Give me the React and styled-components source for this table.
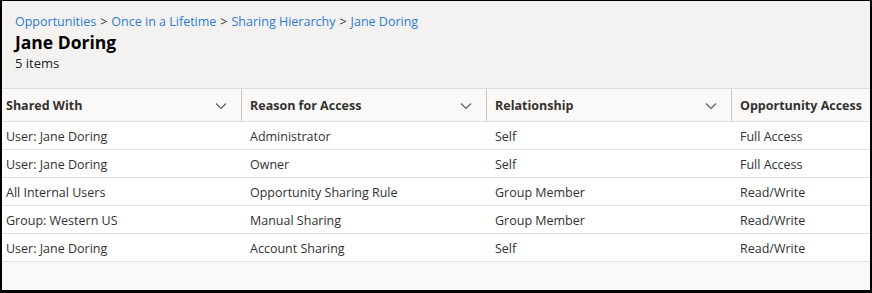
import React from 'react';
import styled, { createGlobalStyle } from 'styled-components';

const GlobalStyle = createGlobalStyle`
  html, body {
    margin: 0;
    padding: 0;
    background: #000;
  }
  * {
    box-sizing: border-box;
  }
`;

const columns = [
  { key: 'sharedWith', label: 'Shared With', width: 240, pad: 4, sortable: true },
  { key: 'reason', label: 'Reason for Access', width: 245, pad: 8, sortable: true },
  { key: 'relationship', label: 'Relationship', width: 245, pad: 8, sortable: true },
  { key: 'access', label: 'Opportunity Access', width: 245, pad: 8, sortable: false },
];

const rows = [
  { sharedWith: 'User: Jane Doring', reason: 'Administrator', relationship: 'Self', access: 'Full Access' },
  { sharedWith: 'User: Jane Doring', reason: 'Owner', relationship: 'Self', access: 'Full Access' },
  { sharedWith: 'All Internal Users', reason: 'Opportunity Sharing Rule', relationship: 'Group Member', access: 'Read/Write' },
  { sharedWith: 'Group: Western US', reason: 'Manual Sharing', relationship: 'Group Member', access: 'Read/Write' },
  { sharedWith: 'User: Jane Doring', reason: 'Account Sharing', relationship: 'Self', access: 'Read/Write' },
];

const crumbs = ['Opportunities', 'Once in a Lifetime', 'Sharing Hierarchy', 'Jane Doring'];

const Chevron = () => (
  <svg width="12" height="8" viewBox="0 0 12 8" fill="none">
    <path d="M1 1.5 L6 6.5 L11 1.5" stroke="#605e5c" strokeWidth="1.2" />
  </svg>
);

const App = function App() {
  const template = columns.map((c) => `${c.width}px`).join(' ');
  return (
    <>
      <GlobalStyle />
      <Frame>
        <PageHeader>
          <Breadcrumb>
            {crumbs.map((c, i) => (
              <React.Fragment key={c}>
                {i > 0 && <Sep>&gt;</Sep>}
                <Crumb href="#">{c}</Crumb>
              </React.Fragment>
            ))}
          </Breadcrumb>
          <Title>Jane Doring</Title>
          <Count>5 items</Count>
        </PageHeader>
        <Grid>
          <HeaderRow $template={template}>
            {columns.map((c, i) => (
              <HeaderCell key={c.key} $pad={c.pad} $last={i === columns.length - 1}>
                <span>{c.label}</span>
                {c.sortable && <Chevron />}
              </HeaderCell>
            ))}
          </HeaderRow>
          {rows.map((r, ri) => (
            <Row key={ri} $template={template}>
              {columns.map((c) => (
                <Cell key={c.key} $pad={c.pad}>{r[c.key]}</Cell>
              ))}
            </Row>
          ))}
        </Grid>
        <Filler />
      </Frame>
    </>
  );
};

const Frame = styled.div`
  width: 872px;
  height: 293px;
  border-style: solid;
  border-color: #000;
  border-width: 1px 2px 3px 2px;
  background: #faf9f8;
  display: flex;
  flex-direction: column;
  overflow: hidden;
  font-family: "Open Sans", "Noto Sans", sans-serif;
  color: #323130;
`;

const PageHeader = styled.div`
  background: #f3f2f1;
  padding: 11px 13px 0;
  height: 88px;
  flex-shrink: 0;
  border-bottom: 1px solid #e1dfdd;
`;

const Breadcrumb = styled.div`
  font-size: 12.5px;
  line-height: 19px;
  display: flex;
  align-items: center;
  white-space: nowrap;
`;

const Crumb = styled.a`
  color: #2b7cd3;
  text-decoration: none;
`;

const Sep = styled.span`
  color: #323130;
  margin: 0 4px;
`;

const Title = styled.div`
  font-size: 17.5px;
  font-weight: 700;
  line-height: 23px;
  color: #000;
`;

const Count = styled.div`
  font-size: 13px;
  line-height: 18px;
  color: #201f1e;
`;

const Grid = styled.div`
  display: flex;
  flex-direction: column;
  overflow: hidden;
  flex-shrink: 0;
`;

const HeaderRow = styled.div`
  display: grid;
  grid-template-columns: ${(p) => p.$template};
  height: 33px;
  background: #faf9f8;
  border-bottom: 1px solid #e1dfdd;
`;

const HeaderCell = styled.div`
  display: flex;
  align-items: center;
  justify-content: space-between;
  padding: 1px 14px 0 ${(p) => p.$pad}px;
  border-right: ${(p) => (p.$last ? 'none' : '1px solid #c8c6c4')};
  font-size: 12.5px;
  font-weight: 700;
  color: #323130;
  white-space: nowrap;
`;

const Row = styled.div`
  display: grid;
  grid-template-columns: ${(p) => p.$template};
  height: 28px;
  background: #fff;
  border-bottom: 1px solid #e1dfdd;
`;

const Cell = styled.div`
  display: flex;
  align-items: center;
  padding: 2px 0 0 ${(p) => p.$pad}px;
  font-size: 12.5px;
  color: #323130;
  white-space: nowrap;
`;

const Filler = styled.div`
  flex: 1;
  background: #faf9f8;
`;

export default App;
